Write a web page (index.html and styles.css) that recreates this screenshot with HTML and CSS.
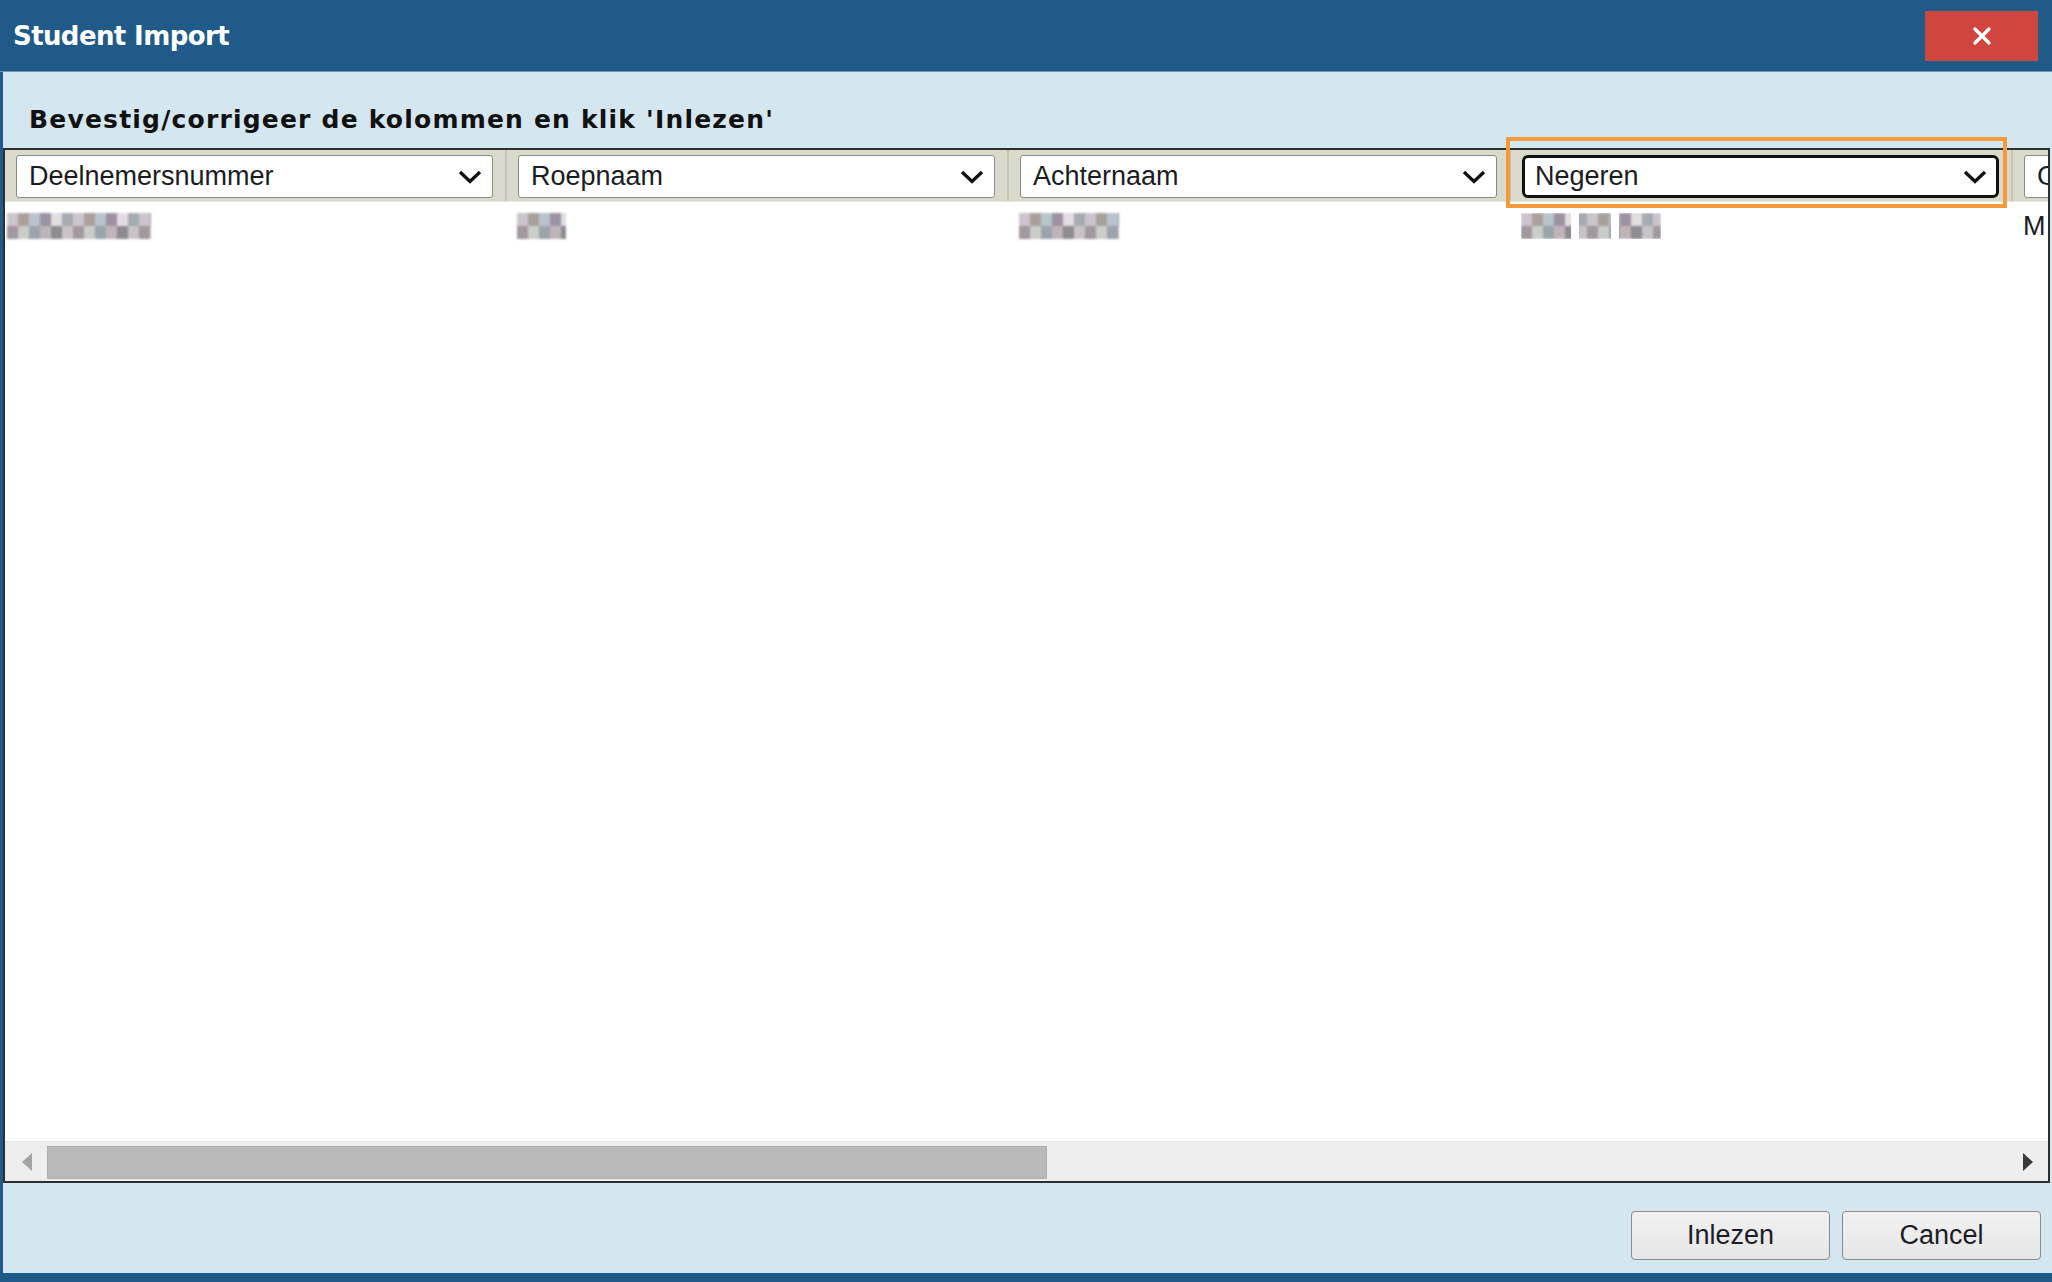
FILE: index.html
```html
<!DOCTYPE html>
<html lang="nl">
<head>
    <meta charset="UTF-8">
    <meta name="viewport" content="width=device-width, initial-scale=1.0">
    <title>Student Import</title>
    <link rel="stylesheet" href="styles.css">
</head>
<body>
    <div class="dialog">
        <div class="titlebar">
            <span class="title">Student Import</span>
            <button class="close-button" aria-label="Sluiten">
                <svg width="20" height="20" viewBox="0 0 20 20">
                    <path d="M3 3 L17 17 M17 3 L3 17" stroke="#fff" stroke-width="3.4" stroke-linecap="round"/>
                </svg>
            </button>
        </div>

        <div class="panel">
            <div class="prompt">Bevestig/corrigeer de kolommen en klik 'Inlezen'</div>

            <div class="grid">
                <div class="grid-view">
                    <div class="grid-head">
                        <div class="col-head">
                            <div class="combo"><span>Deelnemersnummer</span><svg class="chevron" width="24" height="14" viewBox="0 0 24 14"><polyline points="2,2 12,11.5 22,2" fill="none" stroke="#111" stroke-width="3.4"/></svg></div>
                        </div>
                        <div class="col-head">
                            <div class="combo"><span>Roepnaam</span><svg class="chevron" width="24" height="14" viewBox="0 0 24 14"><polyline points="2,2 12,11.5 22,2" fill="none" stroke="#111" stroke-width="3.4"/></svg></div>
                        </div>
                        <div class="col-head">
                            <div class="combo"><span>Achternaam</span><svg class="chevron" width="24" height="14" viewBox="0 0 24 14"><polyline points="2,2 12,11.5 22,2" fill="none" stroke="#111" stroke-width="3.4"/></svg></div>
                        </div>
                        <div class="col-head">
                            <div class="combo focused"><span>Negeren</span><svg class="chevron" width="24" height="14" viewBox="0 0 24 14"><polyline points="2,2 12,11.5 22,2" fill="none" stroke="#111" stroke-width="3.4"/></svg></div>
                        </div>
                        <div class="col-head">
                            <div class="combo"><span>G</span></div>
                        </div>
                    </div>

                    <div class="grid-row">
                        <div class="cell first"><span class="mosaic m-number"></span></div>
                        <div class="cell"><span class="mosaic m-short"></span></div>
                        <div class="cell"><span class="mosaic m-name"></span></div>
                        <div class="cell"><span class="mosaic m-date"></span></div>
                        <div class="cell">M</div>
                    </div>
                </div>

                <div class="hscroll">
                    <svg class="arrow" width="12" height="18" viewBox="0 0 12 18"><polygon points="11,0 11,18 1,9" fill="#a3a3a3"/></svg>
                    <div class="track">
                        <div class="thumb"></div>
                    </div>
                    <svg class="arrow" width="12" height="18" viewBox="0 0 12 18"><polygon points="1,0 1,18 11,9" fill="#3b3b3b"/></svg>
                </div>
            </div>

            <div class="actions">
                <button class="btn">Inlezen</button>
                <button class="btn">Cancel</button>
            </div>
        </div>

        <div class="highlight"></div>
    </div>
</body>
</html>
```

FILE: styles.css
```css
body {
    margin: 0;
    font-family: "Liberation Sans", Arial, sans-serif;
    background: #d4e6f0;
}

.dialog {
    position: relative;
    width: 2052px;
    height: 1282px;
    display: flex;
    flex-direction: column;
    overflow: hidden;
}

.titlebar {
    height: 71px;
    flex: none;
    display: flex;
    align-items: center;
    justify-content: space-between;
    padding: 0 14px 0 13px;
    background: #1f5a89;
    border-bottom: 1px solid #6f93b3;
}

.title {
    font-family: "DejaVu Sans", Verdana, sans-serif;
    font-weight: bold;
    font-size: 26px;
    letter-spacing: -0.6px;
    color: #ffffff;
}

.close-button {
    width: 113px;
    height: 50px;
    margin-top: 1px;
    border: none;
    background: #d0463e;
    display: flex;
    align-items: center;
    justify-content: center;
    padding: 0;
}

.panel {
    flex: 1;
    display: flex;
    flex-direction: column;
    background: #d4e6f0;
    border-left: 3px solid #1f5a89;
    border-bottom: 9px solid #1f5a89;
}

.prompt {
    height: 76px;
    box-sizing: border-box;
    padding: 31px 0 0 26px;
    line-height: 34px;
    font-family: "DejaVu Sans", Verdana, sans-serif;
    font-weight: bold;
    font-size: 25px;
    letter-spacing: 1.2px;
    color: #111111;
}

.grid {
    height: 1035px;
    flex: none;
    box-sizing: border-box;
    margin-right: 2px;
    border: 2px solid #2e2e2e;
    background: #ffffff;
    display: flex;
    flex-direction: column;
}

.grid-view {
    flex: 1;
    overflow: hidden;
}

.grid-head {
    display: flex;
    height: 52px;
    box-sizing: border-box;
    background: #d9d9cc;
    border-bottom: 1px solid #e6e6dc;
    width: 3000px;
}

.col-head {
    width: 502px;
    flex: none;
    box-sizing: border-box;
    padding: 0 12px 0 11px;
    display: flex;
    align-items: center;
    border-right: 2px solid #c6c6b6;
}

.combo {
    flex: 1;
    height: 43px;
    box-sizing: border-box;
    display: flex;
    align-items: center;
    justify-content: space-between;
    padding: 0 10px 0 12px;
    background: #ffffff;
    border: 1.5px solid #8a8a8a;
    border-radius: 3px;
    font-size: 27px;
    color: #1b1b24;
    margin-top: 2px;
}

.combo.focused {
    border: 3px solid #111111;
    border-radius: 6px;
    padding: 0 9px 0 10px;
}

.chevron {
    flex: none;
}

.grid-row {
    display: flex;
    height: 48px;
    width: 3000px;
}

.cell {
    width: 502px;
    flex: none;
    box-sizing: border-box;
    padding-left: 10px;
    display: flex;
    align-items: center;
    font-size: 27px;
    color: #1b1b24;
}

.cell.first {
    padding-left: 2px;
}

.mosaic {
    display: block;
    height: 26px;
    filter: blur(1px);
    background:
        repeating-linear-gradient(90deg, #cbc4cc 0 11px, #a9a09c 11px 22px, #b9c3cc 22px 33px, #9d92a1 33px 44px, #e1dde1 44px 55px, #a6abb1 55px 66px) top / 100% 50% no-repeat,
        repeating-linear-gradient(90deg, #a2989f 0 11px, #cbcdca 11px 22px, #9ca4ab 22px 33px, #bfb4ba 33px 44px, #8e8a91 44px 55px, #c9c3c9 55px 66px) bottom / 100% 50% no-repeat;
}

.m-number {
    width: 144px;
}

.m-short {
    width: 49px;
}

.m-name {
    width: 100px;
}

.m-date {
    width: 140px;
    -webkit-mask: linear-gradient(90deg, #000 0 50px, transparent 50px 58px, #000 58px 90px, transparent 90px 98px, #000 98px);
    mask: linear-gradient(90deg, #000 0 50px, transparent 50px 58px, #000 58px 90px, transparent 90px 98px, #000 98px);
}

.hscroll {
    height: 40px;
    flex: none;
    display: flex;
    align-items: center;
    background: #eeeeee;
    border-top: 1px solid #e4e4e4;
    box-sizing: border-box;
}

.hscroll .arrow {
    flex: none;
    margin: 0 14px 0 16px;
}

.track {
    flex: 1;
    height: 33px;
    margin-top: 2px;
}

.thumb {
    width: 1000px;
    height: 100%;
    box-sizing: border-box;
    background: #b9b9b9;
    border: 1px solid #adadad;
}

.actions {
    flex: 1;
    display: flex;
    justify-content: flex-end;
    align-items: flex-start;
    gap: 12px;
    padding: 28px 11px 0 0;
}

.btn {
    width: 199px;
    height: 49px;
    box-sizing: border-box;
    border: 1.5px solid #8a8a8a;
    border-radius: 4px;
    background: linear-gradient(#f1f1f1, #e6e6e6);
    font-family: "Liberation Sans", Arial, sans-serif;
    font-size: 27px;
    color: #1c1c28;
}

.highlight {
    position: absolute;
    left: 1506px;
    top: 137px;
    width: 501px;
    height: 71px;
    box-sizing: border-box;
    border: 4px solid #f59a3b;
}
```
